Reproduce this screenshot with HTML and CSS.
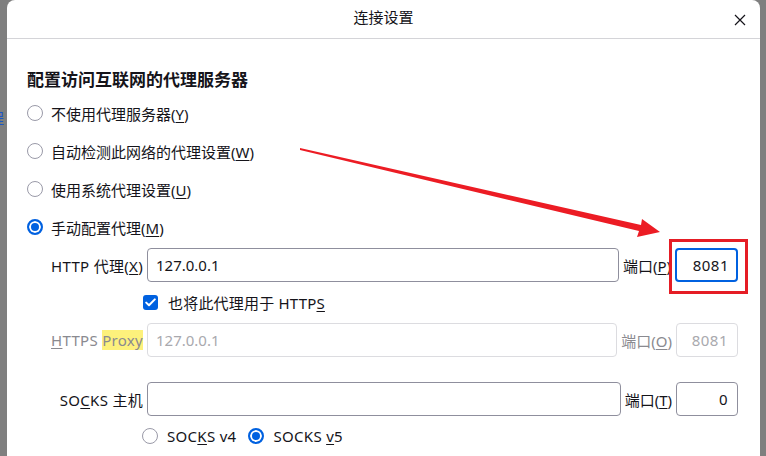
FILE: index.html
```html
<!DOCTYPE html>
<html lang="zh-CN">
<head>
<meta charset="utf-8">
<title>连接设置</title>
<link rel="stylesheet" href="styles.css">
</head>
<body>
<div class="strip left"><span class="peek">程</span></div>
<div class="dialog">
  <div class="header">
    <div class="title">连接设置</div>
    <svg class="close" width="12" height="12" viewBox="0 0 12 12"><path d="M1 1 L11 11 M11 1 L1 11" stroke="#15141a" stroke-width="1.2" fill="none"/></svg>
  </div>
  <div class="content">
    <h2 class="heading">配置访问互联网的代理服务器</h2>
    <div class="radio-row"><span class="radio"></span><span>不使用代理服务器(<u>Y</u>)</span></div>
    <div class="radio-row"><span class="radio"></span><span>自动检测此网络的代理设置(<u>W</u>)</span></div>
    <div class="radio-row"><span class="radio"></span><span>使用系统代理设置(<u>U</u>)</span></div>
    <div class="radio-row"><span class="radio on"></span><span>手动配置代理(<u>M</u>)</span></div>

    <div class="proxy-row r-http">
      <span class="plabel">HTTP 代理(<u>X</u>)</span>
      <span class="field">127.0.0.1</span>
      <span class="portlabel">端口(<u>P</u>)</span>
      <span class="port focus">8081</span>
    </div>
    <div class="check-row">
      <span class="checkbox"><svg width="11" height="9" viewBox="0 0 11 9"><path d="M1.2 4.6 L4 7.3 L9.8 1.4" stroke="#fff" stroke-width="2" fill="none" stroke-linecap="round" stroke-linejoin="round"/></svg></span>
      <span>也将此代理用于 HTTP<u>S</u></span>
    </div>
    <div class="proxy-row r-https disabled">
      <span class="plabel"><u>H</u>TTPS <span class="hl">Proxy</span></span>
      <span class="field">127.0.0.1</span>
      <span class="portlabel">端口(<u>O</u>)</span>
      <span class="port">8081</span>
    </div>
    <div class="proxy-row r-socks">
      <span class="plabel">SO<u>C</u>KS 主机</span>
      <span class="field"></span>
      <span class="portlabel">端口(<u>T</u>)</span>
      <span class="port">0</span>
    </div>
    <div class="socks-row">
      <span class="radio"></span><span class="socks-text">SOC<u>K</u>S v4</span>
      <span class="radio on"></span><span class="socks-text">SOCKS <u>v</u>5</span>
    </div>
  </div>
</div>
<div class="strip right"></div>

<div class="mark-box"></div>
<svg class="arrow" width="766" height="456" viewBox="0 0 766 456">
  <polygon points="300,148 641,225 642,219 660,232 637,237 639,231 300,150" fill="#ec1c24"/>
</svg>
</body>
</html>
```
FILE: styles.css
```css
* { box-sizing: border-box; }
html, body { margin: 0; padding: 0; }
body {
  width: 766px;
  height: 456px;
  overflow: hidden;
  background: #7f7f7f;
  display: flex;
  font-family: "Noto Sans", "Noto Sans CJK SC", sans-serif;
  font-size: 15px;
  color: #15141a;
  position: relative;
}
u { text-decoration-thickness: 1px; text-underline-offset: 2px; }
.strip { flex: none; overflow: hidden; }
.strip.left { width: 7px; }
.strip.right { width: 6px; }
.peek {
  display: block;
  margin: 108px 0 0 -11px;
  color: #1a56c9;
  font-size: 15px;
  line-height: 20px;
}
.dialog {
  flex: 1;
  background: #fff;
  border-radius: 8px 8px 0 0;
  display: flex;
  flex-direction: column;
}
.header {
  height: 41px;
  border-bottom: 1px solid #d4d4d8;
  display: flex;
  align-items: center;
  justify-content: center;
  position: relative;
}
.title { font-size: 15px; line-height: 20px; margin-top: -4px; }
.close { position: absolute; right: 14px; top: 14px; }
.content { padding: 29px 22px 0 20px; }
.heading {
  margin: 0;
  font-size: 17px;
  font-weight: bold;
  line-height: 24px;
  height: 24px;
}
.radio-row {
  height: 38px;
  display: flex;
  align-items: center;
  gap: 8px;
}
.heading + .radio-row { margin-top: 2px; }
.radio {
  flex: none;
  width: 16px;
  height: 16px;
  border-radius: 50%;
  border: 1.5px solid #9a9aa8;
  background: #fff;
}
.radio.on {
  border: 2px solid #0061e0;
  background: #0061e0;
  box-shadow: inset 0 0 0 2px #fff;
}
.proxy-row {
  height: 34px;
  display: flex;
  align-items: center;
}
.r-http { margin-top: 2px; }
.r-https { margin-top: 1px; }
.r-socks { margin-top: 25px; }
.plabel {
  flex: none;
  width: 120px;
  text-align: right;
  white-space: nowrap;
  padding-right: 4px;
  letter-spacing: 0.3px;
}
.field {
  flex: 1;
  height: 34px;
  border: 1px solid #8f8f9d;
  border-radius: 4px;
  padding: 0 8px;
  line-height: 32px;
}
.portlabel { flex: none; padding: 0 4px 0 4px; white-space: nowrap; }
.port {
  flex: none;
  width: 62px;
  height: 34px;
  border: 1px solid #8f8f9d;
  border-radius: 4px;
  text-align: right;
  padding: 0 9px;
  line-height: 32px;
  letter-spacing: 0.5px;
}
.port.focus {
  border: 2px solid #0061e0;
  line-height: 30px;
  padding-right: 7px;
  width: 63px;
}
.disabled .plabel, .disabled .portlabel { color: #8a8a90; }
.disabled .field, .disabled .port { border-color: #dcdce0; color: #a9a9ae; }
.hl { background: #fdf17c; color: #8a8a90; }
.check-row {
  height: 40px;
  display: flex;
  align-items: center;
  gap: 10px;
  padding-left: 116px;
  letter-spacing: 0.2px;
}
.checkbox {
  flex: none;
  width: 15px;
  height: 15px;
  border-radius: 3px;
  background: #0061e0;
  display: flex;
  align-items: center;
  justify-content: center;
}
.socks-row {
  height: 40px;
  display: flex;
  align-items: center;
  gap: 9px;
  padding-left: 115px;
}
.socks-text { letter-spacing: 0.3px; }
.socks-row .radio.on { margin-left: 3px; }
.mark-box {
  position: absolute;
  left: 669px;
  top: 239px;
  width: 79px;
  height: 55px;
  border: 3px solid #e51d25;
}
.arrow { position: absolute; left: 0; top: 0; pointer-events: none; }
```
